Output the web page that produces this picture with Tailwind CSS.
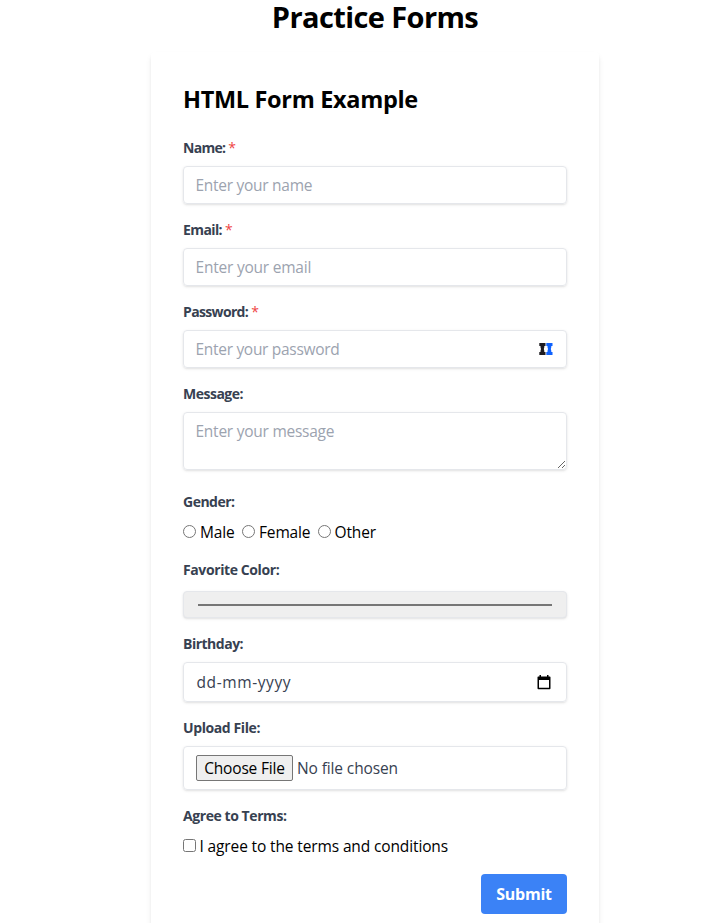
<!DOCTYPE html>
<html lang="en">
<head>
<meta charset="utf-8">
<title>Practice Forms</title>
<script src="https://cdn.jsdelivr.net/npm/@tailwindcss/browser@4"></script>
</head>
<body class="h-[923px] overflow-hidden bg-white font-['Open_Sans','Noto_Sans',sans-serif] text-base text-black">
<div class="w-[750px]">
<h1 class="h-9 text-center text-[29px] leading-[34px] font-bold tracking-[-0.6px]">Practice Forms</h1>
<form class="mx-auto mt-4 h-[900px] w-[448px] rounded bg-white px-8 pt-8 shadow-[0_4px_6px_-1px_rgba(0,0,0,0.1),0_2px_4px_-2px_rgba(0,0,0,0.1)]">
<h2 class="h-[54px] text-[23.5px] leading-[31px] font-bold tracking-[-0.32px]">HTML Form Example</h2>
<div class="mb-4">
<label for="name" class="mb-2 block text-sm leading-5 font-bold tracking-[-0.7px] text-[#374151]">Name: <span class="font-normal text-[#ef4444]">*</span></label>
<input id="name" placeholder="Enter your name" class="block h-[38px] w-full rounded border border-[#e5e7eb] px-[11.500px] text-[15.5px] leading-5 tracking-[-0.28px] shadow-sm placeholder:text-[#9ca3af]">
</div>
<div class="mb-4">
<label for="email" class="mb-2 block text-sm leading-5 font-bold tracking-[-0.6px] text-[#374151]">Email: <span class="font-normal text-[#ef4444]">*</span></label>
<input id="email" placeholder="Enter your email" class="block h-[38px] w-full rounded border border-[#e5e7eb] px-[11.500px] text-[15.5px] leading-5 tracking-[-0.22px] shadow-sm placeholder:text-[#9ca3af]">
</div>
<div class="mb-4">
<label for="password" class="mb-2 block text-sm leading-5 font-bold tracking-[-0.65px] text-[#374151]">Password: <span class="font-normal text-[#ef4444]">*</span></label>
<div class="flex h-[38px] items-center rounded border border-[#e5e7eb] pr-3 pl-[11.500px] shadow-sm">
<input id="password" type="password" placeholder="Enter your password" class="min-w-0 flex-1 text-[15.5px] leading-5 tracking-[-0.3px] placeholder:text-[#9ca3af]">
<svg class="mr-px h-3 w-[14px]" viewBox="0 0 14 12"><path d="M.3 0h6.200v3H5.300v1.200L4.800 6l.5 1.800V9h1.200v3H.3V9h1.200V7.800L2 6l-.5-1.800V3H.3z" fill="#1d1b20"/><path d="M7.300 0h6.200v3h-1.200v1.200L11.800 6l.5 1.800V9h1.200v3H7.300V9h1.200V7.800L9 6l-.5-1.800V3H7.300z" fill="#0f62fe"/></svg>
</div>
</div>
<div class="mb-[22px]">
<label for="message" class="mb-2 block text-sm leading-5 font-bold tracking-[-0.5px] text-[#374151]">Message:</label>
<textarea id="message" placeholder="Enter your message" class="block h-[58px] w-full rounded border border-[#e5e7eb] px-[11.500px] py-2 text-[15.5px] leading-5 tracking-[-0.25px] shadow-sm placeholder:text-[#9ca3af]"></textarea>
</div>
<div class="mb-4">
<p class="mb-2 text-sm leading-5 font-bold tracking-[-0.5px] text-[#374151]">Gender:</p>
<div class="flex h-6 items-center text-[15.5px] tracking-[-0.15px]">
<label class="flex w-[59px] items-center gap-[4px]"><input type="radio" name="gender" class="m-0 mb-px h-[13px] w-[13px]"><span class="pt-[2px]">Male</span></label>
<label class="flex w-[76px] items-center gap-[4px]"><input type="radio" name="gender" class="m-0 mb-px h-[13px] w-[13px]"><span class="pt-[2px]">Female</span></label>
<label class="flex items-center gap-[3.500px]"><input type="radio" name="gender" class="m-0 mb-px h-[13px] w-[13px]"><span class="pt-[2px]">Other</span></label>
</div>
</div>
<div class="mb-4">
<p class="mb-[11px] text-sm leading-5 font-bold tracking-[-0.4px] text-[#374151]">Favorite Color:</p>
<div class="flex h-[27px] items-center rounded border border-[#e5e7eb] bg-[#efefef] px-[14px] shadow-sm"><div class="h-[2px] w-full bg-[#767676]"></div></div>
</div>
<div class="mb-4">
<p class="mb-2 text-sm leading-5 font-bold tracking-[-0.5px] text-[#374151]">Birthday:</p>
<div class="flex h-10 items-center justify-between rounded border border-[#e5e7eb] px-[12.500px] text-[#374151] shadow-sm">
<span class="pt-[2px] text-[15.5px] tracking-[0.6px]">dd-mm-yyyy</span>
<svg class="mr-[2.500px] h-[15px] w-[14px]" viewBox="0 0 14 15"><path d="M2.500 0h1.500v1.500h6V0h1.500v1.500h1.200q.8 0 .8.8v11q0 .9-.8.9H1.300q-.8 0-.8-.9v-11q0-.8.8-.8h1.200zM2 5v7.800h10V5z" fill="#000" fill-rule="evenodd"/></svg>
</div>
</div>
<div class="mb-4">
<p class="mb-2 text-sm leading-5 font-bold tracking-[-0.4px] text-[#374151]">Upload File:</p>
<div class="flex h-11 items-center gap-1 rounded border border-[#e5e7eb] px-3 text-[15.5px] text-[#374151] shadow-sm">
<button type="button" class="h-[26px] w-[97px] rounded-[2px] border border-[#767676] bg-[#efefef] leading-6 tracking-[-0.17px] whitespace-nowrap text-black">Choose File</button>
<span class="pt-[2px] tracking-[-0.12px]">No file chosen</span>
</div>
</div>
<div class="mb-4">
<p class="mb-2 text-sm leading-5 font-bold tracking-[-0.43px] text-[#374151]">Agree to Terms:</p>
<label class="flex h-6 items-center gap-[3.500px] text-[15.5px] tracking-[-0.13px]"><input type="checkbox" class="m-0 mb-[2px] h-[13px] w-[13px]"><span class="pt-[2px]">I agree to the terms and conditions</span></label>
</div>
<div class="flex justify-end"><button type="button" class="h-10 w-[86px] rounded bg-[#3b82f6] text-base font-bold tracking-[-0.25px] text-white">Submit</button></div>
</form>
</div>
</body>
</html>
